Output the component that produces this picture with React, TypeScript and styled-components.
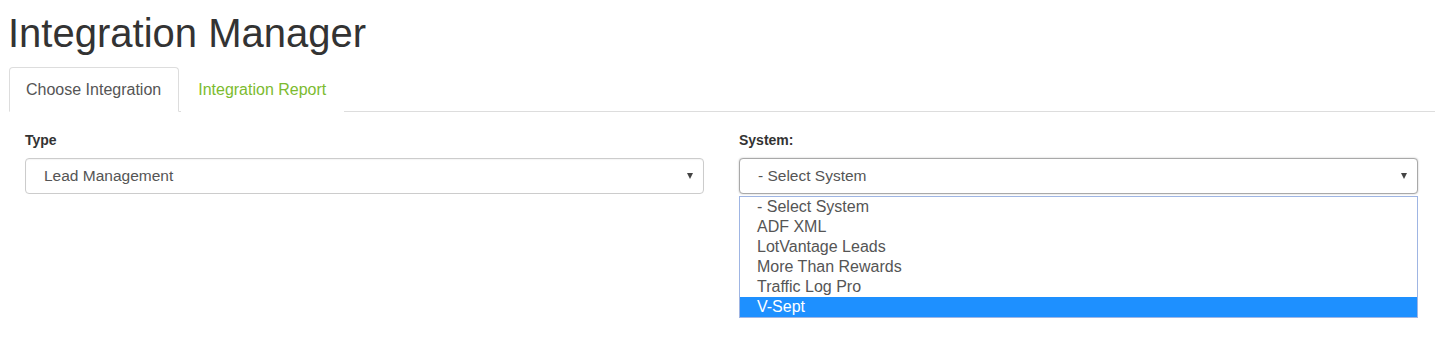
import { useState } from "react";
import styled, { createGlobalStyle } from "styled-components";

const GlobalStyle = createGlobalStyle`
  body {
    margin: 0;
    font-family: "Liberation Sans", Arial, sans-serif;
    color: #333;
    background: #fff;
  }
`;

const Page = styled.div`
  min-height: 349px;
  padding: 13px 2px 0 8px;
  box-sizing: border-box;
`;

const Title = styled.h1`
  margin: 0 0 14px;
  font-size: 40px;
  font-weight: 400;
  line-height: 40px;
  color: #333;
`;

const Tabs = styled.div`
  display: flex;
  gap: 2px;
  margin-left: 1px;
  border-bottom: 1px solid #ddd;
`;

const Tab = styled.div<{ $active?: boolean }>`
  padding: 11px 17px 11px 16px;
  margin-bottom: -1px;
  font-size: 16px;
  line-height: 21px;
  color: ${(p) => (p.$active ? "#555" : "#7cbb2f")};
  background: #fff;
  border: 1px solid ${(p) => (p.$active ? "#ddd" : "transparent")};
  border-bottom-color: ${(p) => (p.$active ? "#fff" : "transparent")};
  border-radius: 4px 4px 0 0;
  cursor: pointer;
`;

const Form = styled.div`
  display: grid;
  grid-template-columns: 679px 679px;
  column-gap: 35px;
  align-items: start;
  padding: 19px 0 0 17px;
`;

const Field = styled.div`
  display: flex;
  flex-direction: column;
`;

const Label = styled.label`
  font-size: 14px;
  font-weight: 700;
  line-height: 18px;
  margin-bottom: 9px;
  color: #333;
`;

const SelectBox = styled.div<{ $focused?: boolean }>`
  display: flex;
  align-items: center;
  height: 36px;
  box-sizing: border-box;
  padding: 0 10px 0 18px;
  border: 1px solid ${(p) => (p.$focused ? "#a9a9a9" : "#ccc")};
  border-radius: 4px;
  box-shadow: ${(p) =>
    p.$focused ? "0 0 2px rgba(0,0,0,0.25)" : "inset 0 1px 1px rgba(0,0,0,0.04)"};
  font-size: 15.5px;
  color: #555;
  background: #fff;
`;

const SelectText = styled.span`
  flex: 1;
`;

const Caret = styled.span`
  width: 0;
  height: 0;
  border-left: 3.5px solid transparent;
  border-right: 3.5px solid transparent;
  border-top: 6px solid #444;
`;

const OptionList = styled.ul`
  margin: 2px 0 0;
  padding: 0;
  list-style: none;
  background: #fff;
  border: 1px solid #9fb5e3;
`;

const OptionItem = styled.li<{ $selected?: boolean }>`
  height: 20px;
  line-height: 19px;
  padding-left: 17px;
  font-size: 16px;
  color: ${(p) => (p.$selected ? "#fff" : "#555")};
  background: ${(p) => (p.$selected ? "#1e90ff" : "transparent")};
`;

const systems = [
  "- Select System",
  "ADF XML",
  "LotVantage Leads",
  "More Than Rewards",
  "Traffic Log Pro",
  "V-Sept",
];

export default function App() {
  const [tab, setTab] = useState(0);
  const [hovered, setHovered] = useState("V-Sept");

  return (
    <Page>
      <GlobalStyle />
      <Title>Integration Manager</Title>
      <Tabs>
        <Tab $active={tab === 0} onClick={() => setTab(0)}>
          Choose Integration
        </Tab>
        <Tab $active={tab === 1} onClick={() => setTab(1)}>
          Integration Report
        </Tab>
      </Tabs>
      <Form>
        <Field>
          <Label>Type</Label>
          <SelectBox>
            <SelectText>Lead Management</SelectText>
            <Caret />
          </SelectBox>
        </Field>
        <Field>
          <Label>System:</Label>
          <SelectBox $focused>
            <SelectText>- Select System</SelectText>
            <Caret />
          </SelectBox>
          <OptionList>
            {systems.map((s) => (
              <OptionItem
                key={s}
                $selected={s === hovered}
                onMouseEnter={() => setHovered(s)}
              >
                {s}
              </OptionItem>
            ))}
          </OptionList>
        </Field>
      </Form>
    </Page>
  );
}
